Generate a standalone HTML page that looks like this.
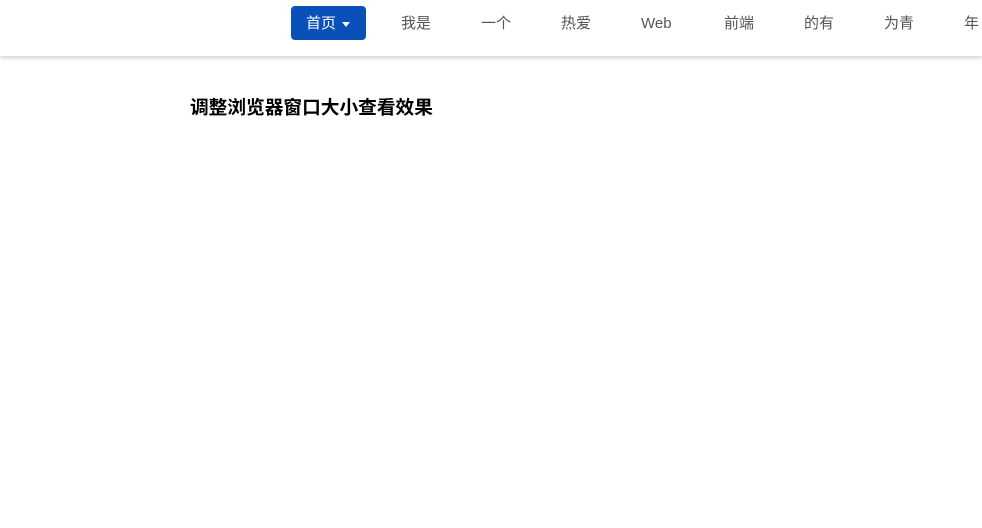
<!DOCTYPE html>
<html><head><meta charset="utf-8"><style>
html,body{margin:0;padding:0;width:982px;height:528px;overflow:hidden;background:#fff;font-family:"Liberation Sans","Noto Sans CJK SC",sans-serif;}
.hdr{position:absolute;left:0;top:0;width:982px;height:56px;background:#fff;box-shadow:0 2px 4px rgba(0,0,0,.18);}
.btn{position:absolute;left:291px;top:6px;width:75px;height:34px;background:#0b4fb8;border-radius:4px;color:#fff;font-size:15px;line-height:34px;}
.btn span{position:absolute;left:15px;top:1px;}
.btn i{position:absolute;left:51px;top:16px;width:0;height:0;border-left:4px solid transparent;border-right:4px solid transparent;border-top:5px solid #fff;}
.it{position:absolute;top:7px;line-height:34px;font-size:15px;color:#555;white-space:nowrap;}
h1{position:absolute;left:190px;top:96px;margin:0;font-size:18.7px;font-weight:bold;color:#000;line-height:24px;}
</style></head><body>
<div class="hdr">
<div class="btn"><span>首页</span><i></i></div>
<div class="it" style="left:401px">我是</div>
<div class="it" style="left:481px">一个</div>
<div class="it" style="left:561px">热爱</div>
<div class="it" style="left:641px">Web</div>
<div class="it" style="left:724px">前端</div>
<div class="it" style="left:804px">的有</div>
<div class="it" style="left:884px">为青</div>
<div class="it" style="left:964px">年</div>
</div>
<h1>调整浏览器窗口大小查看效果</h1>
</body></html>
